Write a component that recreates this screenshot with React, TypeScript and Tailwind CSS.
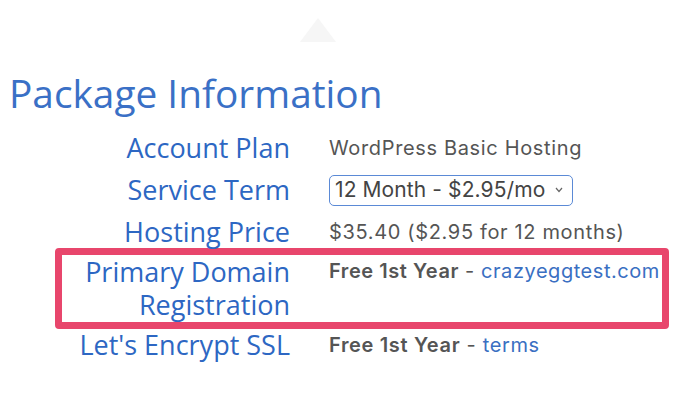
import React from 'react';

const label = "text-right text-[27px] leading-[32px] text-[#2d67c3] font-['Open_Sans',sans-serif]";
const value = "text-[20px] leading-[32px] tracking-[0.65px] text-[#555]";

function Row({ name, children }: { name: string; children: React.ReactNode }) {
  return (
    <div className="flex mb-[10px]">
      <div className={`w-[290px] ${label}`}>{name}</div>
      <div className={`ml-[39px] ${value}`}>{children}</div>
    </div>
  );
}

export default function App() {
  return (
    <div className="w-[675px] h-[400px] bg-white overflow-hidden font-['Open_Sans',sans-serif]">
      <div className="flex justify-center pt-[18px] h-[70px]">
        <svg width="36" height="26" viewBox="0 0 36 26" className="ml-[-40px]">
          <polygon points="18,0 36,24 0,24" fill="#f6f6f6" />
        </svg>
      </div>
      <h1 className="pl-[9px] text-[38.8px] leading-[46px] text-[#3a70c6] font-normal">Package Information</h1>
      <div className="mt-[16px] font-['Inter',sans-serif]">
        <Row name="Account Plan">WordPress Basic Hosting</Row>
        <div className="flex mb-[10px]">
          <div className={`w-[290px] ${label}`}>Service Term</div>
          <div className="ml-[39px] flex items-center">
            <div className="w-[244px] h-[31px] border border-[#5b8ad6] rounded-[5px] flex items-center pl-[5px] pr-[9px] text-[21px] tracking-[0.1px] text-[#444]">
              <span className="flex-1">12 Month - $2.95/mo</span>
              <svg width="8" height="6" viewBox="0 0 8 6">
                <path d="M1 1 L4 4.5 L7 1" stroke="#666" strokeWidth="1.2" fill="none" />
              </svg>
            </div>
          </div>
        </div>
        <Row name="Hosting Price">$35.40 ($2.95 for 12 months)</Row>
      </div>
      <div className="ml-[55px] w-[614px] mt-[-10px] border-[7px] border-[#e8466c] rounded-[4px] flex pb-[1px] font-['Inter',sans-serif]">
        <div className="w-[228px] text-right text-[27px] leading-[33px] text-[#2d67c3] font-['Open_Sans',sans-serif]">
          <div>Primary Domain</div>
          <div>Registration</div>
        </div>
        <div className="ml-[39px] text-[20px] leading-[33px] tracking-[0.55px] text-[#555] whitespace-nowrap">
          <span className="font-semibold">Free 1st Year</span> - <span className="text-[#3a6fc2]">crazyeggtest.com</span>
        </div>
      </div>
      <div className="flex font-['Inter',sans-serif]">
        <div className={`w-[290px] ${label}`}>Let's Encrypt SSL</div>
        <div className={`ml-[39px] ${value}`}>
          <span className="font-semibold">Free 1st Year</span> - <span className="text-[#3a6fc2]">terms</span>
        </div>
      </div>
    </div>
  );
}
